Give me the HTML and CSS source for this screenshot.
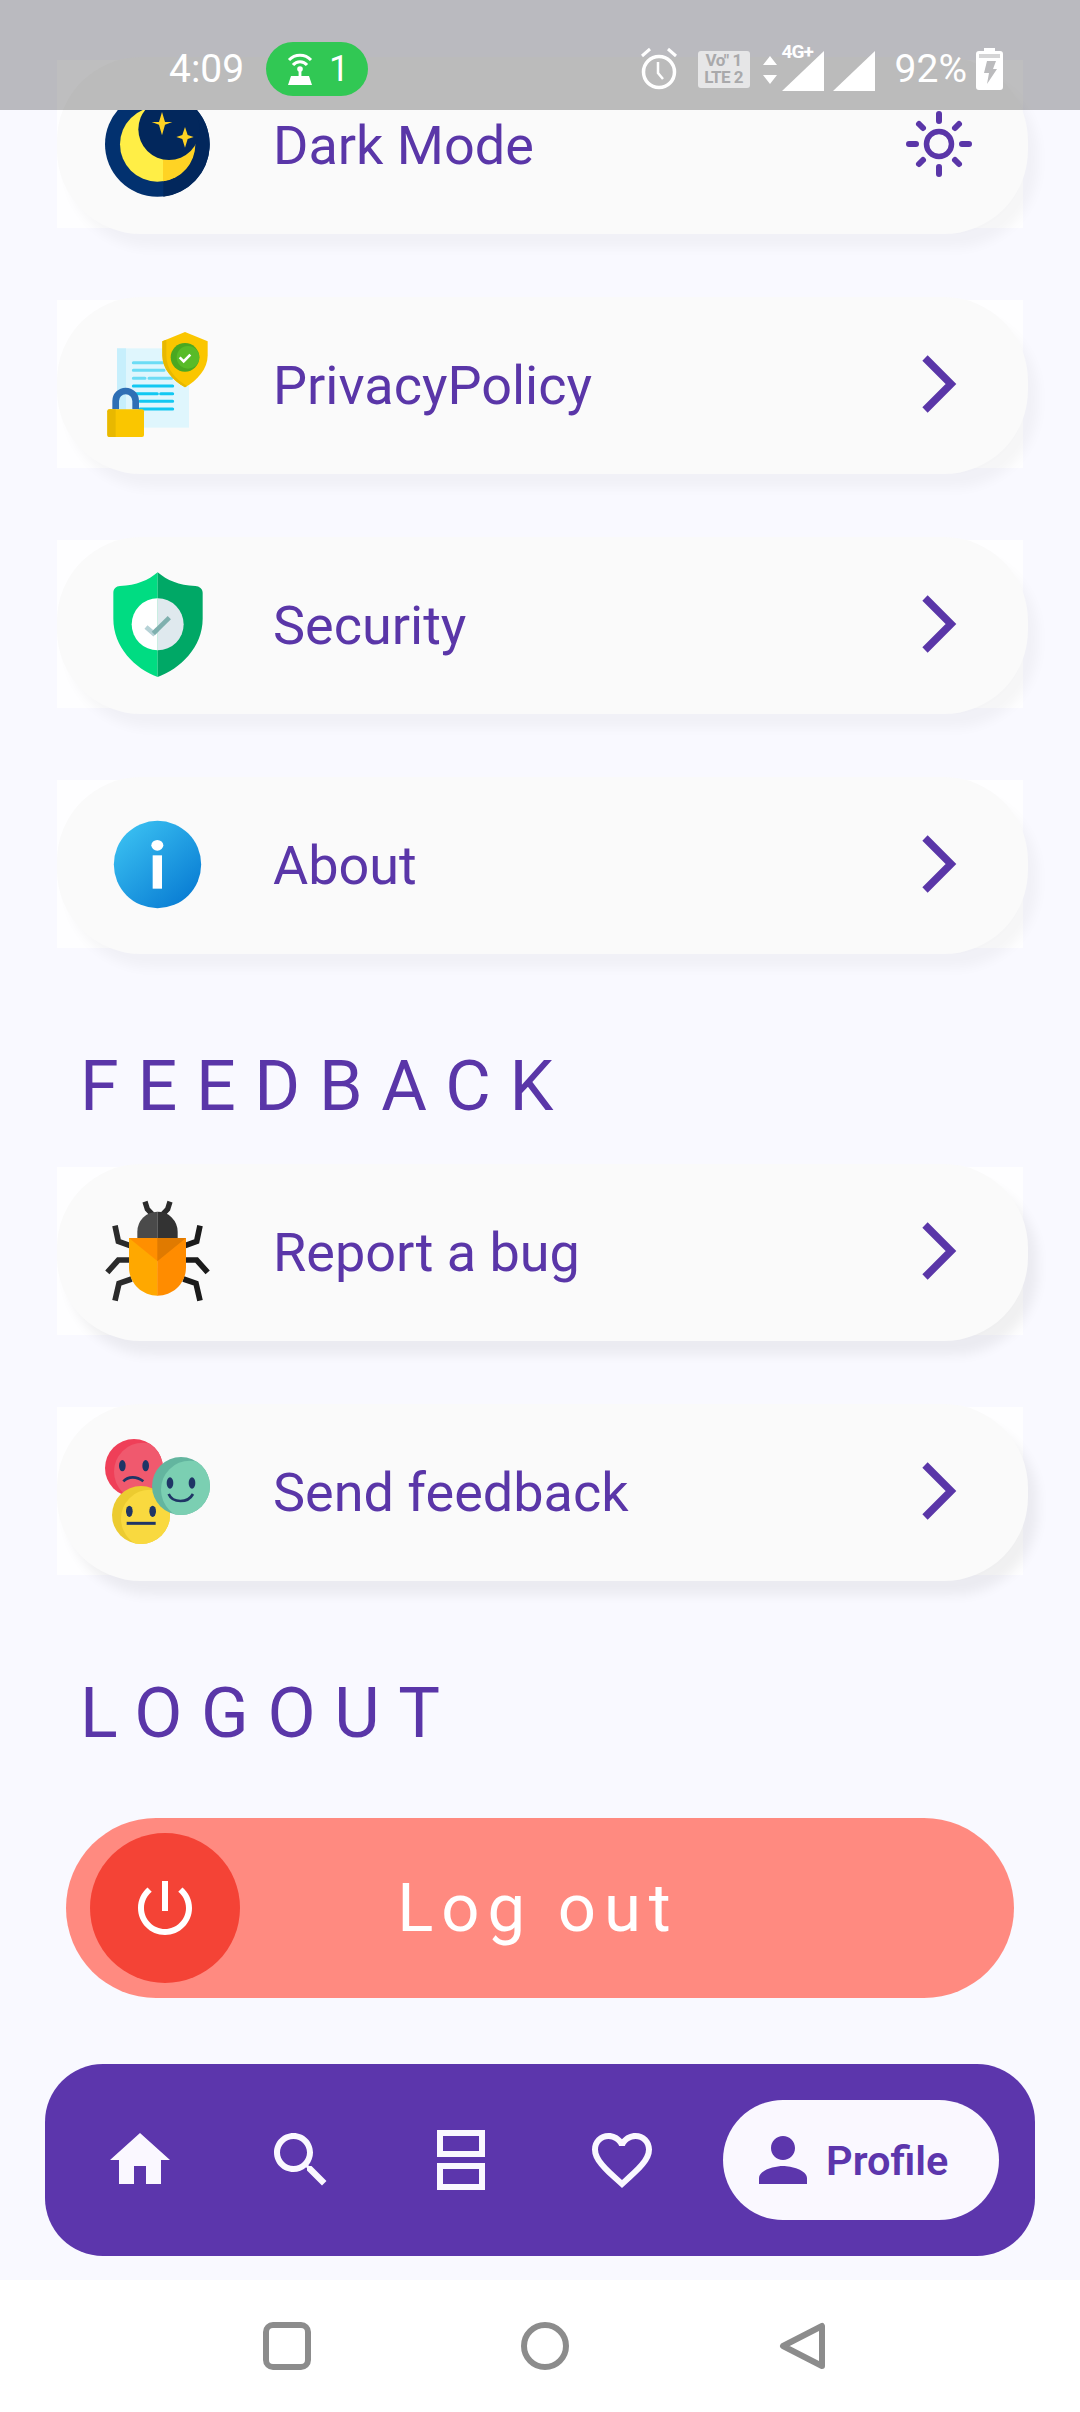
FILE: index.html
```html
<!DOCTYPE html>
<html>
<head>
	<title>Profile</title>
	<link rel="stylesheet" href="styles.css">
</head>
<body>
	<div class="status">
		<span class="clock">4:09</span>
		<span class="hotspot">
			<svg class="hotspot-icon" viewBox="0 0 30 36"><path d="M4 9a15 15 0 0 1 22 0M8 14a9 9 0 0 1 14 0" fill="none" stroke="#fff" stroke-width="3"/><circle cx="15" cy="18" r="2.8" fill="#fff"/><rect x="13.6" y="19" width="2.8" height="6" fill="#fff"/><path d="M6 25h18l3 9H3z" fill="#fff"/></svg>
			<span>1</span>
		</span>
		<div class="status-right">
			<svg class="alarm" viewBox="0 0 40 44"><path d="M3 9l8-7M37 9l-8-7" stroke="#fff" stroke-width="3" fill="none"/><circle cx="20" cy="25" r="15.5" fill="none" stroke="#fff" stroke-width="3.5"/><path d="M19 15v11l5 6" fill="none" stroke="#fff" stroke-width="2.5"/></svg>
			<span class="volte"><span>Vo" 1</span><span>LTE 2</span></span>
			<svg class="arrows" viewBox="0 0 14 32"><path d="M7 2l7 9H0zM7 30l7-9H0z" fill="#fff"/></svg>
			<span class="net"><span class="net-label">4G+</span><svg class="bars" viewBox="0 0 42 40"><path d="M42 0v40H0z" fill="#fff"/></svg></span>
			<svg class="bars bars-plain" viewBox="0 0 42 40"><path d="M42 0v40H0z" fill="#fff"/></svg>
			<span class="percent">92%</span>
			<svg class="battery" viewBox="0 0 27 42"><path d="M8 0h11v3h5a3 3 0 0 1 3 3v33a3 3 0 0 1-3 3H3a3 3 0 0 1-3-3V6a3 3 0 0 1 3-3h5z" fill="#fff"/><rect x="3" y="6" width="21" height="4" fill="#d5d5d6"/><path d="M11 13h9l-3 8h4l-10 15 2-11H8z" fill="#bbbbbd"/></svg>
		</div>
	</div>

	<div class="screen">
		<div class="row">
			<div class="card">
				<svg class="pic" viewBox="0 0 315 315">
					<defs><clipPath id="moonCut"><rect x="0" y="54" width="315" height="261"/></clipPath></defs>
					<g clip-path="url(#moonCut)">
						<circle cx="157" cy="157" r="157" fill="#02316f"/>
						<path d="M175 1a157 157 0 0 1 139 165 157 157 0 0 1-139 148z" fill="#02275c"/>
						<circle cx="157" cy="157" r="112" fill="#ffee46"/>
						<path d="M174 46a112 112 0 0 1 0 222z" fill="#ffd324"/>
						<circle cx="192" cy="112" r="92" fill="#02275c"/>
						<path d="M171 60l9 30 22 0-22 8-9 32-9-32-22-8 22 0z" fill="#ffd324"/>
						<path d="M240 105l8 24 18 6-18 6-8 26-8-26-18-6 18-6z" fill="#ffd324"/>
					</g>
				</svg>
				<span class="label">Dark Mode</span>
				<svg class="end" viewBox="0 0 66 66">
					<circle cx="33" cy="33" r="12.5" fill="none" stroke="#5a36a8" stroke-width="5.5"/>
					<path d="M33 3v7M33 56v7M3 33h7M56 33h7M13 13l4 4M53 13l-4 4M13 53l4-4M53 53l-4-4" fill="none" stroke="#5a36a8" stroke-width="6" stroke-linecap="round"/>
				</svg>
			</div>
		</div>

		<div class="row">
			<div class="card">
				<svg class="pic" viewBox="0 0 315 315">
					<rect x="36" y="49" width="216" height="238" fill="#dff6fd"/>
					<rect x="36" y="49" width="27" height="238" fill="#c7effc"/>
					<path d="M85 92h92M85 115h92M85 139h35M132 139h68" stroke="#6cdcf5" stroke-width="9" stroke-linecap="round" fill="none"/>
					<path d="M85 162h118M85 185h72M167 185h36M105 208h98M105 231h98" stroke="#12c8f2" stroke-width="9" stroke-linecap="round" fill="none"/>
					<path d="M240 0l68 28v42c0 40-30 75-68 96-38-21-68-56-68-96V28z" fill="#fac600"/>
					<path d="M240 166c-38-21-68-56-68-96V28l12-5v47c0 40 25 70 62 92z" fill="#e8b800"/>
					<circle cx="240" cy="76" r="43" fill="#4aa821"/>
					<circle cx="249" cy="76" r="34" fill="#58bb28"/>
					<path d="M224 76l12 12 20-20" fill="none" stroke="#fff" stroke-width="8"/>
					<path d="M32 232v-25a30 30 0 0 1 60 0v25" fill="none" stroke="#2f6fb5" stroke-width="20"/>
					<rect x="7" y="232" width="110" height="83" rx="6" fill="#fac600"/>
					<path d="M32 232H13a6 6 0 0 0-6 6v71a6 6 0 0 0 6 6h19z" fill="#e8b800"/>
				</svg>
				<span class="label">PrivacyPolicy</span>
				<svg class="end" viewBox="0 0 66 66"><path d="M19 7l26 26-26 26" fill="none" stroke="#5a36a8" stroke-width="7.5"/></svg>
			</div>
		</div>

		<div class="row">
			<div class="card">
				<svg class="pic" viewBox="0 0 315 315">
					<path d="M158 1C130 25 95 40 45 42 33 43 25 50 25 62v78c0 85 65 150 133 175z" fill="#00dc82"/>
					<path d="M158 1c28 24 63 39 113 41 12 1 22 8 22 20v78c0 85-67 150-135 175z" fill="#00a866"/>
					<path d="M158 79a78 78 0 0 0 0 156z" fill="#fff"/>
					<path d="M158 79a78 78 0 0 1 0 156z" fill="#dfe9ee"/>
					<path d="M123 165l22 19 13-12" fill="none" stroke="#b6d2d6" stroke-width="14"/>
					<path d="M145 184l48-47" fill="none" stroke="#7fb0ae" stroke-width="14"/>
				</svg>
				<span class="label">Security</span>
				<svg class="end" viewBox="0 0 66 66"><path d="M19 7l26 26-26 26" fill="none" stroke="#5a36a8" stroke-width="7.5"/></svg>
			</div>
		</div>

		<div class="row">
			<div class="card">
				<svg class="pic" viewBox="0 0 315 315">
					<defs><linearGradient id="infoFill" x1="0.15" y1="0.1" x2="0.85" y2="0.9"><stop offset="0" stop-color="#38bdf0"/><stop offset="1" stop-color="#0a7ed4"/></linearGradient></defs>
					<circle cx="157.5" cy="157.5" r="131" fill="url(#infoFill)"/>
					<ellipse cx="157" cy="100" rx="18" ry="16" fill="#fff"/>
					<rect x="143" y="130" width="28" height="100" fill="#fff"/>
				</svg>
				<span class="label">About</span>
				<svg class="end" viewBox="0 0 66 66"><path d="M19 7l26 26-26 26" fill="none" stroke="#5a36a8" stroke-width="7.5"/></svg>
			</div>
		</div>

		<h2 class="heading">FEEDBACK</h2>

		<div class="row">
			<div class="card card-strong">
				<svg class="pic" viewBox="0 0 315 315">
					<path d="M120 8l7 22 15 16M195 8l-7 22-15 16" fill="none" stroke="#2b2b2b" stroke-width="16"/>
					<path d="M30 80l10 47 35 13M7 220l33-37h35M30 305l12-52 38-13" fill="none" stroke="#2b2b2b" stroke-width="17"/>
					<path d="M285 80l-10 47-35 13M308 220l-33-37h-35M285 305l-12-52-38-13" fill="none" stroke="#1b1b1b" stroke-width="17"/>
					<path d="M97 125V98a60 60 0 0 1 60-60v87z" fill="#4a4a4a"/>
					<path d="M218 125V98a60 60 0 0 0-61-60v87z" fill="#333"/>
					<path d="M72 117h86v173c-48 0-86-38-86-85z" fill="#ffa800"/>
					<path d="M243 117h-86v173c48 0 86-38 86-85z" fill="#ff8c00"/>
					<path d="M72 117h86v70z" fill="#ff8f00"/>
					<path d="M243 117h-86v70z" fill="#e07a00"/>
				</svg>
				<span class="label">Report a bug</span>
				<svg class="end" viewBox="0 0 66 66"><path d="M19 7l26 26-26 26" fill="none" stroke="#5a36a8" stroke-width="7.5"/></svg>
			</div>
		</div>

		<div class="row">
			<div class="card card-strong">
				<svg class="pic" viewBox="0 0 315 315">
					<defs>
						<clipPath id="faceRed"><circle cx="87" cy="87" r="87"/></clipPath>
						<clipPath id="faceYellow"><circle cx="108" cy="228" r="87"/></clipPath>
						<clipPath id="faceGreen"><circle cx="228" cy="141" r="87"/></clipPath>
					</defs>
					<circle cx="87" cy="87" r="87" fill="#ef3f58"/>
					<circle cx="114" cy="98" r="87" fill="#f0596e" clip-path="url(#faceRed)"/>
					<ellipse cx="52" cy="80" rx="10" ry="17" fill="#1f3566"/>
					<ellipse cx="122" cy="80" rx="10" ry="17" fill="#1f3566"/>
					<path d="M55 127c15-16 40-16 60 0" fill="none" stroke="#1f3566" stroke-width="8"/>
					<circle cx="108" cy="228" r="87" fill="#eccb30"/>
					<circle cx="135" cy="239" r="87" fill="#f9d93f" clip-path="url(#faceYellow)"/>
					<ellipse cx="73" cy="217" rx="10" ry="17" fill="#1f3566"/>
					<ellipse cx="143" cy="217" rx="10" ry="17" fill="#1f3566"/>
					<path d="M65 253h87" fill="none" stroke="#1f3566" stroke-width="9"/>
					<circle cx="228" cy="141" r="87" fill="#63b59f"/>
					<circle cx="255" cy="152" r="87" fill="#7bcfb2" clip-path="url(#faceGreen)"/>
					<ellipse cx="195" cy="132" rx="10" ry="17" fill="#1f3566"/>
					<ellipse cx="261" cy="132" rx="10" ry="17" fill="#1f3566"/>
					<path d="M191 165c12 28 58 28 73 0" fill="none" stroke="#1f3566" stroke-width="8"/>
				</svg>
				<span class="label">Send feedback</span>
				<svg class="end" viewBox="0 0 66 66"><path d="M19 7l26 26-26 26" fill="none" stroke="#5a36a8" stroke-width="7.5"/></svg>
			</div>
		</div>

		<h2 class="heading">LOGOUT</h2>

		<div class="logout">
			<span class="logout-knob">
				<svg class="nav-icon" viewBox="0 0 24 24"><path d="M13 3h-2v10h2V3zm4.83 2.17l-1.42 1.42C17.99 7.86 19 9.81 19 12c0 3.87-3.13 7-7 7s-7-3.13-7-7c0-2.19 1.01-4.14 2.58-5.42L6.17 5.17C4.23 6.82 3 9.26 3 12c0 4.97 4.03 9 9 9s9-4.03 9-9c0-2.74-1.23-5.18-3.17-6.83z" fill="#fff"/></svg>
			</span>
			<span class="logout-text">Log out</span>
		</div>

		<div class="tabs">
			<span class="tab">
				<svg class="nav-icon" viewBox="0 0 24 24"><path d="M10 20v-6h4v6h5v-8h3L12 3 2 12h3v8z" fill="#faf8ff"/></svg>
			</span>
			<span class="tab">
				<svg class="nav-icon" viewBox="0 0 24 24"><path d="M15.5 14h-.79l-.28-.27C15.41 12.59 16 11.11 16 9.5 16 5.91 13.09 3 9.5 3S3 5.91 3 9.5 5.91 16 9.5 16c1.61 0 3.09-.59 4.23-1.57l.27.28v.79l5 4.99L20.49 19l-4.99-5zm-6 0C7.01 14 5 11.99 5 9.5S7.01 5 9.5 5 14 7.01 14 9.5 11.99 14 9.5 14z" fill="#faf8ff"/></svg>
			</span>
			<span class="tab">
				<svg class="nav-icon" viewBox="0 0 72 72"><path d="M15 9h42v21H15zM15 42h42v21H15z" fill="none" stroke="#faf8ff" stroke-width="6"/></svg>
			</span>
			<span class="tab">
				<svg class="nav-icon" viewBox="0 0 24 24"><path d="M16.5 3c-1.74 0-3.41.81-4.5 2.09C10.91 3.81 9.24 3 7.5 3 4.42 3 2 5.42 2 8.5c0 3.78 3.4 6.86 8.55 11.54L12 21.35l1.45-1.32C18.6 15.36 22 12.28 22 8.5 22 5.42 19.58 3 16.5 3zm-4.4 15.55l-.1.1-.1-.1C7.14 14.24 4 11.39 4 8.5 4 6.5 5.5 5 7.5 5c1.54 0 3.04.99 3.57 2.36h1.87C13.46 5.99 14.96 5 16.5 5c2 0 3.5 1.5 3.5 3.5 0 2.89-3.14 5.74-7.9 10.05z" fill="#faf8ff"/></svg>
			</span>
			<span class="tab-active">
				<svg class="person" viewBox="4 4 16 16"><path d="M12 12c2.21 0 4-1.79 4-4s-1.79-4-4-4-4 1.79-4 4 1.79 4 4 4zm0 2c-2.67 0-8 1.34-8 4v2h16v-2c0-2.66-5.33-4-8-4z" fill="#5c36ac"/></svg>
				<span>Profile</span>
			</span>
		</div>
	</div>

	<div class="sysbar">
		<svg class="sys-icon" viewBox="0 0 48 48"><rect x="3" y="3" width="42" height="42" rx="7" fill="none" stroke="#8c8c8c" stroke-width="6"/></svg>
		<svg class="sys-icon" viewBox="0 0 48 48"><circle cx="24" cy="24" r="21" fill="none" stroke="#8c8c8c" stroke-width="6"/></svg>
		<svg class="sys-icon" viewBox="0 0 48 48"><path d="M43 4v40L4 24z" fill="none" stroke="#8c8c8c" stroke-width="6" stroke-linejoin="round"/></svg>
	</div>
</body>
</html>
```

FILE: styles.css
```css
* {
	box-sizing: border-box;
}
body {
	margin: 0;
	width: 1080px;
	height: 2412px;
	overflow: hidden;
	position: relative;
	font-family: Roboto, sans-serif;
	background-color: #fff;
}

/* status bar sits over the scrolled list */
.status {
	position: absolute;
	top: 0;
	left: 0;
	width: 1080px;
	height: 110px;
	padding: 42px 77px 14px 169px;
	display: flex;
	align-items: center;
	background-color: rgba(0, 0, 0, 0.25);
	color: #fff;
	font-size: 39px;
}
.clock {
	width: 97px;
}
.hotspot {
	width: 102px;
	height: 54px;
	border-radius: 27px;
	background-color: #31c854;
	display: flex;
	align-items: center;
	padding-left: 19px;
	gap: 14px;
	font-size: 36px;
}
.hotspot-icon {
	width: 30px;
	height: 36px;
}
.status-right {
	margin-left: auto;
	display: flex;
	align-items: center;
}
.alarm {
	width: 40px;
	height: 44px;
}
.volte {
	width: 52px;
	height: 37px;
	margin-left: 19px;
	border-radius: 3px;
	background-color: #e6e6e7;
	color: #a9a9ab;
	font-size: 17px;
	font-weight: 700;
	line-height: 17px;
	letter-spacing: -0.5px;
	display: flex;
	flex-direction: column;
	align-items: center;
	justify-content: center;
	white-space: nowrap;
}
.arrows {
	width: 14px;
	height: 32px;
	margin-left: 13px;
	margin-top: 2px;
}
.net {
	display: flex;
	position: relative;
	margin-left: 5px;
}
.net-label {
	position: absolute;
	left: 0;
	top: -7px;
	font-size: 19px;
	font-weight: 700;
	letter-spacing: -1px;
}
.bars {
	width: 42px;
	height: 40px;
	margin-top: 4px;
}
.bars-plain {
	margin-left: 9px;
}
.percent {
	margin-left: 20px;
}
.battery {
	width: 27px;
	height: 42px;
	margin-left: 9px;
}

.screen {
	height: 2280px;
	padding-top: 60px;
	background-color: #f9f9ff;
}

/* white box behind each pill */
.row {
	display: flow-root;
	width: 966px;
	height: 168px;
	margin: 0 0 72px 57px;
	background-color: #fefeff;
}
.row:has(+ .heading) {
	margin-bottom: 0;
}
.card {
	height: 177px;
	margin: -3px -5px 0 0;
	padding: 0 56px 3px 48px;
	display: flex;
	align-items: center;
	border-radius: 84px;
	background-color: #fafafa;
	box-shadow: 10px 14px 12px rgba(0, 0, 0, 0.035);
}
.card-strong {
	box-shadow: 10px 14px 12px rgba(0, 0, 0, 0.06);
}
.pic {
	width: 105px;
	height: 105px;
	flex-shrink: 0;
}
.label {
	margin-left: 63px;
	padding-top: 3px;
	font-size: 54px;
	color: #5a36a8;
}
.end {
	width: 66px;
	height: 66px;
	margin-left: auto;
}

.heading {
	margin: 93px 0 36px 80px;
	line-height: 90px;
	font-size: 70px;
	font-weight: 400;
	letter-spacing: 18.7px;
	color: #5a36a8;
}

.logout {
	width: 948px;
	height: 180px;
	margin: 0 0 66px 66px;
	padding: 0 28px 0 24px;
	display: grid;
	grid-template-columns: 1fr auto 1fr;
	align-items: center;
	border-radius: 90px;
	background-color: #ff8a80;
}
.heading + .logout {
	margin-top: 60px;
}
.logout-knob {
	width: 150px;
	height: 150px;
	border-radius: 50%;
	background-color: #f44336;
	display: flex;
	align-items: center;
	justify-content: center;
}
.logout-text {
	font-size: 67px;
	font-weight: 400;
	letter-spacing: 8px;
	color: #fff;
}

.tabs {
	width: 990px;
	height: 192px;
	margin-left: 45px;
	padding-left: 15px;
	display: flex;
	align-items: center;
	border-radius: 58px;
	background-color: #5c36ac;
}
.tab {
	width: 160.5px;
	display: flex;
	justify-content: center;
}
.nav-icon {
	width: 72px;
	height: 72px;
}
.tab-active {
	width: 276px;
	height: 120px;
	margin-left: 21px;
	padding-left: 36px;
	display: flex;
	align-items: center;
	gap: 19px;
	border-radius: 60px;
	background-color: #faf8ff;
	color: #5c36ac;
	font-size: 41.5px;
	font-weight: 600;
}
.person {
	width: 48px;
	height: 48px;
}

.sysbar {
	height: 132px;
	padding-top: 42px;
	display: flex;
	align-items: flex-start;
	background-color: #fff;
	padding-left: 263px;
	gap: 210px;
}
.sys-icon {
	width: 48px;
	height: 48px;
}
```
